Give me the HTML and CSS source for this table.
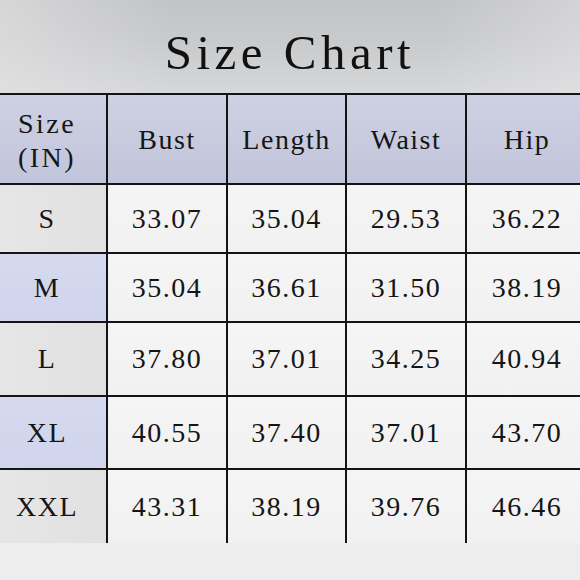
FILE: index.html
```html
<!DOCTYPE html>
<html>
<head>
<meta charset="utf-8">
<link rel="stylesheet" href="styles.css">
</head>
<body>
<div class="page">
  <header class="title-bar">
    <h1 class="title">Size Chart</h1>
  </header>
  <div class="chart">
    <div class="cell head first"><span class="two-line">Size<br>(IN)</span></div>
    <div class="cell head">Bust</div>
    <div class="cell head">Length</div>
    <div class="cell head">Waist</div>
    <div class="cell head">Hip</div>

    <div class="cell first gray">S</div>
    <div class="cell">33.07</div>
    <div class="cell">35.04</div>
    <div class="cell">29.53</div>
    <div class="cell">36.22</div>

    <div class="cell first blue">M</div>
    <div class="cell">35.04</div>
    <div class="cell">36.61</div>
    <div class="cell">31.50</div>
    <div class="cell">38.19</div>

    <div class="cell first gray">L</div>
    <div class="cell">37.80</div>
    <div class="cell">37.01</div>
    <div class="cell">34.25</div>
    <div class="cell">40.94</div>

    <div class="cell first blue">XL</div>
    <div class="cell">40.55</div>
    <div class="cell">37.40</div>
    <div class="cell">37.01</div>
    <div class="cell">43.70</div>

    <div class="cell first gray">XXL</div>
    <div class="cell">43.31</div>
    <div class="cell">38.19</div>
    <div class="cell">39.76</div>
    <div class="cell">46.46</div>
  </div>
</div>
</body>
</html>
```

FILE: styles.css
```css
html, body {
  margin: 0;
  padding: 0;
}

body {
  width: 580px;
  height: 580px;
  overflow: hidden;
  background: #ededed;
  font-family: "Liberation Serif", "Times New Roman", serif;
  color: #151515;
}

.page {
  display: flex;
  flex-direction: column;
  width: 580px;
}

.title-bar {
  height: 93px;
  display: flex;
  align-items: center;
  justify-content: center;
  background:
    linear-gradient(to right, rgba(230,230,230,0.55) 0%, rgba(230,230,230,0) 30%, rgba(230,230,230,0) 75%, rgba(235,235,235,0.4) 100%),
    linear-gradient(to bottom, #c2c3c5 0%, #c9cacc 45%, #d6d7d9 100%);
}

.title {
  margin: 12px 0 0 0;
  font-weight: normal;
  font-size: 49px;
  letter-spacing: 4.5px;
  line-height: 1;
  color: #111;
}

.chart {
  display: grid;
  grid-template-columns: 106px 118px 117px 118px 120px;
  grid-template-rows: 88px 67px 67px 72px 71px 73px;
  gap: 2px;
  padding-top: 2px;
  width: 587px;
  background: #141414;
}

.cell {
  display: flex;
  align-items: center;
  justify-content: center;
  background: linear-gradient(to bottom, #f5f5f5, #f1f1f1);
  font-size: 28px;
  letter-spacing: 1.5px;
  line-height: 1;
}

.first {
  padding-right: 12px;
}

.head {
  background: linear-gradient(to bottom, #ced1e2 0%, #c7cade 60%, #c1c5db 100%);
  padding-top: 2px;
}

.two-line {
  display: block;
  text-align: center;
  line-height: 34px;
  letter-spacing: 2.5px;
  margin-top: 2px;
}

.gray {
  background: linear-gradient(to right, #e6e6e6, #e1e1e1);
}

.blue {
  background: linear-gradient(to bottom, #d6daf0, #d0d4ec);
}
```
